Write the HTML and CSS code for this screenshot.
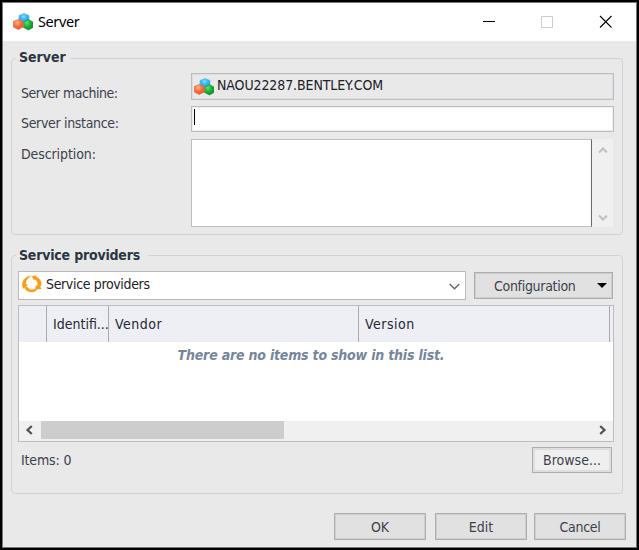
FILE: index.html
```html
<!DOCTYPE html>
<html lang="en">
<head>
<meta charset="utf-8">
<title>Server</title>
<link rel="stylesheet" href="styles.css">
</head>
<body>
<svg class="defs" aria-hidden="true">
  <defs>
    <radialGradient id="blue" cx=".45" cy=".3" r=".7"><stop offset="0" stop-color="#7fdcff"/><stop offset=".5" stop-color="#2bb4f4"/><stop offset="1" stop-color="#2a9ddc"/></radialGradient>
    <radialGradient id="orange" cx=".4" cy=".3" r=".75"><stop offset="0" stop-color="#ffb38c"/><stop offset=".5" stop-color="#fb7038"/><stop offset="1" stop-color="#df4f20"/></radialGradient>
    <radialGradient id="green" cx=".35" cy=".3" r=".75"><stop offset="0" stop-color="#6cdd68"/><stop offset=".5" stop-color="#1cb23a"/><stop offset="1" stop-color="#0a8c22"/></radialGradient>
    <symbol id="hexes" viewBox="0 0 20 18">
      <path d="M6 2.500 11 .5 16 2.500V8L11 10.500 6 8Z" fill="url(#blue)" stroke="#70b7dc" stroke-width=".7" stroke-linejoin="round"/>
      <path d="M10.500 9 15.500 6.500 20 9V14.500L15.500 17 10.500 14.500Z" fill="url(#green)" stroke="#249345" stroke-width=".7" stroke-linejoin="round"/>
      <path d="M.3 8.500 5.300 6.500 10.200 8.500V14L5.300 16.500.3 14Z" fill="url(#orange)" stroke="#d67450" stroke-width=".7" stroke-linejoin="round"/>
    </symbol>
  </defs>
</svg>
<div class="window">
  <header class="titlebar">
    <svg class="app-icon"><use href="#hexes"/></svg>
    <h1 class="title">Server</h1>
    <svg class="controls" viewBox="0 0 130 14">
      <path d="M0 6.500H12" stroke="#000"/>
      <path d="M58.500 1.500H69.500V12.500H58.500Z" fill="none" stroke="#ccc"/>
      <path d="M117 1 128.500 12.500M128.500 1 117 12.500" stroke="#000" stroke-width="1.100"/>
    </svg>
  </header>
  <main class="content">
    <section class="group server-group">
      <h2 class="legend legend-server"><span>Server</span></h2>
      <div class="row row-machine">
        <span class="label l-machine">Server machine:</span>
        <div class="field readonly"><svg class="field-icon"><use href="#hexes"/></svg><span class="host">NAOU22287.BENTLEY.COM</span></div>
      </div>
      <div class="row row-instance">
        <span class="label l-instance">Server instance:</span>
        <div class="field"><i class="caret"></i></div>
      </div>
      <div class="row row-description">
        <span class="label l-description">Description:</span>
        <div class="textarea"></div>
        <div class="vscroll">
          <svg viewBox="0 0 10 7"><path d="M1 5.500 5 1.500 9 5.500"/></svg>
          <svg viewBox="0 0 10 7"><path d="M1 1.500 5 5.500 9 1.500"/></svg>
        </div>
      </div>
    </section>
    <section class="group providers-group">
      <h2 class="legend legend-providers"><span>Service providers</span></h2>
      <div class="toolbar">
        <div class="combo">
          <svg class="cycle" viewBox="0 0 20 18"><g fill="#fb9c13" stroke="#fb9c13" stroke-width=".3"><path d="M9.500 1C4 1.200.5 4.500.6 9L0 9.500 1.200 13.500 5.800 10 4 9.500C3.200 6 5.500 3 9.500 1Z"/><path d="M2.300 12.500C4.500 17.500 10.500 18.300 14.200 15.500L14.600 13C11.500 15.300 7.500 15.500 5 11.800Z"/><path d="M10 1.200 14.300.8 14 1.800C19 3.500 20.300 8.500 18.200 12L19.200 14 13.600 14.200 14 10.300 15.200 10.900C16.300 8.500 15.500 5.500 12.600 4.200L11.800 5Z"/></g></svg>
          <span class="combo-text">Service providers</span>
          <svg class="combo-arrow" viewBox="0 0 11 7"><path d="M.7 1 5.500 5.700 10.300 1"/></svg>
        </div>
        <button class="button config"><span>Configuration</span><i class="triangle"></i></button>
      </div>
      <div class="table">
        <div class="thead">
          <span></span><span class="c-id">Identifi...</span><span class="c-vendor">Vendor</span><span class="c-version">Version</span><span></span>
        </div>
        <div class="tbody"><span class="empty">There are no items to show in this list.</span></div>
        <div class="hscroll">
          <svg viewBox="0 0 8 10"><path d="M6.800 1 2.500 5 6.800 9"/></svg>
          <i class="thumb"></i>
          <svg viewBox="0 0 8 10"><path d="M1.200 1 5.500 5 1.200 9"/></svg>
        </div>
      </div>
      <div class="footer">
        <span class="items">Items: 0</span>
        <button class="button browse"><span>Browse...</span></button>
      </div>
    </section>
    <div class="actions">
      <button class="button ok"><span>OK</span></button>
      <button class="button edit"><span>Edit</span></button>
      <button class="button cancel"><span>Cancel</span></button>
    </div>
  </main>
</div>
</body>
</html>
```
FILE: styles.css
```css
* { box-sizing: border-box; }
html, body { margin: 0; width: 639px; height: 550px; overflow: hidden; background: #000; }
body { padding: 2px; font: 14px/18px "DejaVu Sans Condensed", "DejaVu Sans", sans-serif; font-stretch: condensed; color: #3c414b; }
svg { display: block; flex: none; }
span { white-space: nowrap; }
.defs { position: absolute; width: 0; height: 0; }
.window { width: 635px; height: 546px; border: 1px solid #777; background: #e9e9e9; }
.titlebar { display: flex; align-items: center; height: 38px; background: #fff; padding: 0 23px 0 10px; }
.app-icon { width: 20px; height: 18px; margin-top: -1px; }
.title { margin: -2px 0 0 5px; font: 14.500px/20px "Noto Sans", sans-serif; color: #000; letter-spacing: -.4px; }
.controls { width: 130px; height: 14px; margin-left: auto; }
.content { padding: 17px 13px 0 8px; }
.group { border: 1px solid #d0d2d8; border-radius: 4px; }
.server-group { height: 177px; }
.providers-group { height: 239px; margin-top: 20px; padding: 0 9px 0 6px; }
.legend { margin: -11px 0 0 4px; width: 54px; padding-left: 3px; background: #e9e9e9; font: bold 14px/18px "DejaVu Sans Condensed", "DejaVu Sans", sans-serif; font-stretch: condensed; color: #2d3540; }
.legend-server { margin-top: -11px; }
.legend-providers { width: 132px; margin: -10px 0 0 -2px; letter-spacing: -.2px; }
.row { display: flex; align-items: flex-start; padding-left: 9px; }
.label { width: 170px; flex: none; }
.row-machine { height: 33px; margin-top: 7px; }
.row-instance { height: 33px; }
.row-description { height: 88px; }
.l-machine { padding-top: 11px; letter-spacing: -.48px; }
.l-instance { padding-top: 8px; letter-spacing: -.33px; }
.l-description { padding-top: 6px; letter-spacing: -.1px; }
.field { display: flex; width: 423px; height: 26px; border: 1px solid #bcbdc3; box-shadow: inset 0 0 0 1px #eee; background: #fff; }
.readonly { height: 27px; background: #e9e9e9; box-shadow: inset 0 0 0 1px #dedee1; color: #1e2028; }
.field-icon { width: 20px; height: 18px; margin: 4px 0 0 2px; }
.host { margin: 2px 0 0 3px; letter-spacing: -.1px; }
.caret { width: 1px; height: 16px; margin: 2px 0 0 2px; background: #000; }
.textarea { width: 401px; height: 88px; background: #fff; border: 1px solid #bcbdc3; border-right-color: #696969; }
.vscroll { width: 21px; height: 88px; background: #f0f0f0; display: flex; flex-direction: column; justify-content: space-between; align-items: center; padding: 8px 0 6px; }
.vscroll svg { width: 10px; height: 7px; }
.vscroll path { fill: none; stroke: #bfbfbf; stroke-width: 2; }
.toolbar { display: flex; justify-content: space-between; align-items: flex-start; margin-top: 7px; }
.combo { display: flex; width: 448px; height: 29px; border: 1px solid #b9b9bd; background: #fff; color: #1e2028; }
.cycle { width: 20px; height: 18px; margin: 3px 0 0 3px; }
.combo-text { margin: 3px 0 0 4px; letter-spacing: -.35px; }
.combo-arrow { width: 11px; height: 7px; margin: 11px 5px 0 auto; fill: none; stroke: #666; stroke-width: 1.400; }
.button { display: flex; justify-content: center; align-items: center; padding: 0; height: 27px; border: 1px solid #adadad; box-shadow: inset 0 0 0 1px #cfcfcf; border-radius: 0; background: #e1e1e1; color: #3c414b; font: inherit; }
.config { width: 139px; justify-content: flex-start; padding-left: 19px; margin-top: 1px; letter-spacing: -.3px; }
.triangle { border: 5px solid transparent; border-top-color: #000; border-bottom: 0; margin-left: 21px; }
.table { width: 596px; height: 137px; margin-top: 5px; border: 1px solid #bcbdc3; background: #fff; }
.thead { display: grid; grid-template-columns: 28px 62px 250px 251px 3px; height: 36px; background: #eeeff4; color: #252832; }
.thead span { padding: 9px 0 0 6px; border-right: 1px solid #a9a9ad; overflow: hidden; }
.thead span:last-child { padding: 0; border: 0; }
.thead .c-vendor, .thead .c-version { letter-spacing: .5px; }
.tbody { height: 79px; text-align: center; padding: 4px 10px 0 0; }
.empty { font-weight: bold; font-style: italic; color: #75869a; letter-spacing: -.2px; }
.hscroll { display: flex; align-items: center; height: 20px; padding: 0 6px 2px 6px; background: #f0f0f0; }
.hscroll svg { width: 8px; height: 10px; fill: none; stroke: #505050; stroke-width: 2.200; }
.thumb { width: 243px; height: 18px; margin: 0 auto 0 8px; background: #cdcdcd; }
.footer { display: flex; justify-content: space-between; margin-top: 5px; padding: 0 1px 0 3px; }
.items { margin-top: 4px; letter-spacing: -.15px; }
.browse { width: 80px; height: 26px; background: #efefef; box-shadow: inset 0 0 0 2px #dedede; }
.actions { display: flex; justify-content: flex-end; margin: 19px -3px 0 0; }
.ok { width: 92px; margin-right: 9px; }
.edit { width: 92px; margin-right: 7px; }
.cancel { width: 92px; letter-spacing: -.3px; }
```
